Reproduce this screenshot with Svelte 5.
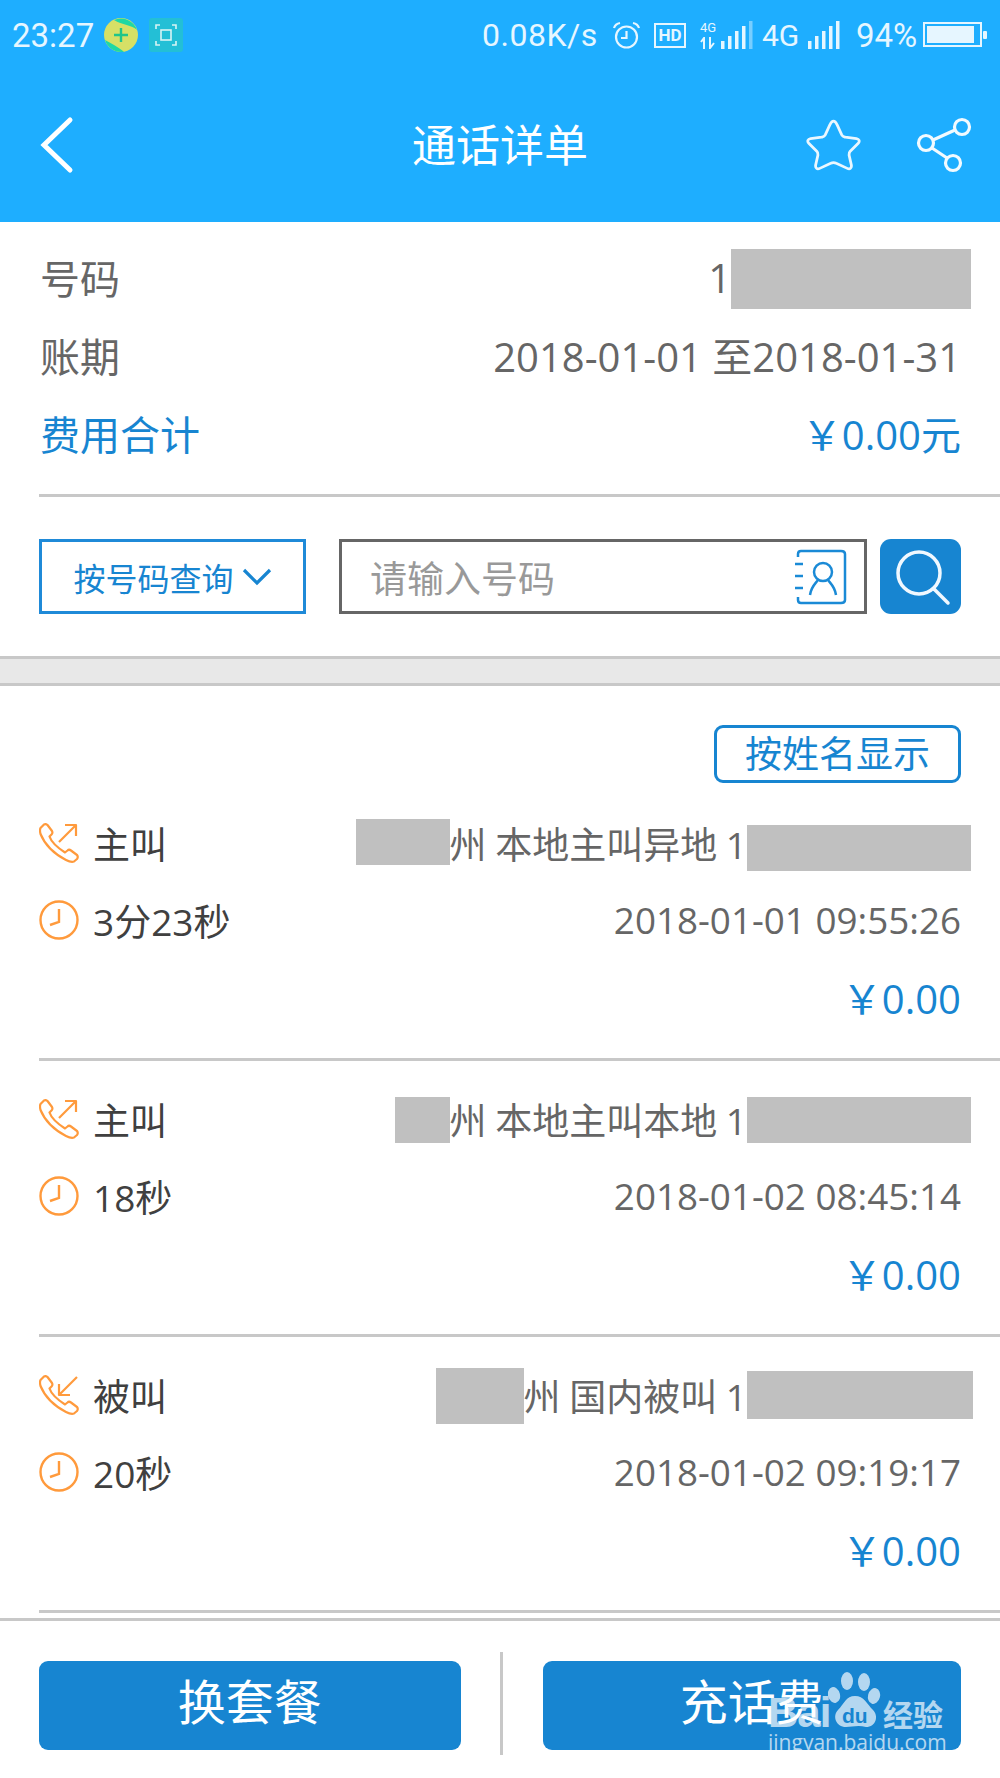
<script>
  const calls = [
    { type: 'out', label: '主叫', city: '州', kind: '本地主叫异地', w1: 94, h1: 46, off1: -2, off2: 10, h2: 46, w2: 224, dur: '3分23秒', time: '2018-01-01 09:55:26' },
    { type: 'out', label: '主叫', city: '州', kind: '本地主叫本地', w1: 55, h1: 46, off1: 3, off2: 3, h2: 46, w2: 224, dur: '18秒', time: '2018-01-02 08:45:14' },
    { type: 'in', label: '被叫', city: '州', kind: '国内被叫', w1: 88, h1: 56, off1: 2, off2: 1, h2: 48, w2: 226, dur: '20秒', time: '2018-01-02 09:19:17' }
  ];
</script>

<div class="page">
  <header class="top">
    <div class="status">
      <span class="clock">23:27</span>
      <svg class="app1" viewBox="0 0 34 34">
        <circle cx="17" cy="17" r="17" fill="#d6e066" />
        <path d="M10 2 A17 17 0 0 1 33 12 C28 7 18 7 10 2 Z M1 22 A17 17 0 0 0 20 33.700 C14 29 8 26 1 22 Z" fill="#1fd8a4" />
        <path d="M17 10 V24 M10 17 H24" stroke="#1fc58a" stroke-width="2.400" />
      </svg>
      <svg class="app2" viewBox="0 0 34 34">
        <rect width="34" height="34" rx="3" fill="#23bfd6" />
        <g fill="none" stroke="#d8f4f4" stroke-width="1.600">
          <path d="M7 11 V7 H11 M23 7 H27 V11 M27 23 V27 H23 M11 27 H7 V23" />
          <rect x="12" y="12" width="10" height="10" />
        </g>
      </svg>
      <span class="speed">0.08K/s</span>
      <svg class="alarm" viewBox="0 0 29 29" fill="none" stroke="#e6f6ff" stroke-width="2.200">
        <circle cx="14.500" cy="16" r="10.500" />
        <path d="M14.500 10 V17 H9 M2 7 C3 4 5 2.500 8 2 M27 7 C26 4 24 2.500 21 2" />
      </svg>
      <span class="hd">HD</span>
      <span class="net">
        <b>4G</b>
        <svg viewBox="0 0 16 12" width="16" height="12"><path d="M4 12 V1 L1 5 M10 0 V11 L14 6" fill="none" stroke="#e6f6ff" stroke-width="2" /></svg>
      </span>
      <svg class="bars" viewBox="0 0 32 28" fill="#e6f6ff">
        <rect x="0" y="20" width="3.500" height="8" /><rect x="7" y="15" width="3.500" height="13" /><rect x="14" y="10" width="3.500" height="18" /><rect x="21" y="5" width="3.500" height="23" /><rect x="28" y="0" width="3.500" height="28" opacity=".45" />
      </svg>
      <span class="lte">4G</span>
      <svg class="bars b2" viewBox="0 0 32 28" fill="#e6f6ff">
        <rect x="0" y="20" width="3.500" height="8" /><rect x="7" y="15" width="3.500" height="13" /><rect x="14" y="10" width="3.500" height="18" /><rect x="21" y="5" width="3.500" height="23" /><rect x="28" y="0" width="3.500" height="28" />
      </svg>
      <span class="pct">94%</span>
      <svg class="battery" viewBox="0 0 66 26">
        <rect x="1" y="1" width="57" height="23" fill="none" stroke="#e6f6ff" stroke-width="2" />
        <rect x="4" y="4" width="47" height="17" fill="#e6f6ff" />
        <rect x="60" y="9" width="4" height="8" rx="1" fill="#e6f6ff" />
      </svg>
    </div>
    <nav class="nav">
      <svg class="back" viewBox="0 0 36 58" fill="none" stroke="#fff" stroke-width="5" stroke-linecap="round"><path d="M32 4 L6 29 L32 54" /></svg>
      <h1>通话详单</h1>
      <svg class="star" viewBox="0 0 60 56" fill="none" stroke="#eaf7ff" stroke-width="3" stroke-linejoin="round">
        <path d="M30 2 C32 2 33 4 34 6 L39 17 C40 19 41 19 43 19.500 L55 21 C58 21.500 59 24 57 26 L48 35 C47 36 47 37 47 39 L49.500 50 C50 53 48 55 45 53.500 L33 48 C31 47 29 47 27 48 L15 53.500 C12 55 10 53 10.500 50 L13 39 C13 37 13 36 12 35 L3 26 C1 24 2 21.500 5 21 L17 19.500 C19 19 20 19 21 17 L26 6 C27 4 28 2 30 2 Z" />
      </svg>
      <svg class="share" viewBox="0 0 56 56" fill="none" stroke="#f2faff" stroke-width="3.200">
        <circle cx="46" cy="10" r="7.500" /><circle cx="10" cy="26" r="7.500" /><circle cx="37" cy="46" r="7.500" />
        <path d="M17 23 L39 13 M16 31 L31 41" />
      </svg>
    </nav>
  </header>

  <section class="summary">
    <div class="info"><span>号码</span><span class="val">1<i class="mask num"></i></span></div>
    <div class="info"><span>账期</span><span class="val">2018-01-01 至2018-01-31</span></div>
    <div class="info total"><span>费用合计</span><span class="val">￥0.00元</span></div>
  </section>

  <section class="query">
    <button class="pick">按号码查询
      <svg viewBox="0 0 30 18" width="30" height="18" fill="none" stroke="#1785d1" stroke-width="3.200"><path d="M2 2 L15 15 L28 2" /></svg>
    </button>
    <div class="input">
      <span>请输入号码</span>
      <svg viewBox="0 0 52 56" width="52" height="56" fill="none" stroke="#1a8ad6" stroke-width="2.500">
        <path d="M3 8 V5 Q3 2 6 2 H46 Q50 2 50 5 V51 Q50 54 46 54 H6 Q3 54 3 51 V48" />
        <path d="M0 15 H8 M0 27 H8 M0 39 H8" />
        <circle cx="28" cy="23" r="9" />
        <path d="M15 46 C16 38 20 35 23 31 M41 46 C40 38 36 35 33 31" />
      </svg>
    </div>
    <button class="search" aria-label="查询">
      <svg viewBox="0 0 60 60" width="60" height="60" fill="none" stroke="#f0f8ff" stroke-width="3.500">
        <circle cx="28" cy="26" r="21" /><path d="M43 42 L57 56" stroke-linecap="round" />
      </svg>
    </button>
  </section>

  <div class="band"></div>

  <section class="list">
    <div class="by-name"><button>按姓名显示</button></div>
    {#each calls as c}
      <article class="call">
        <div class="row">
          <span class="left">
            <svg class="ico" viewBox="0 0 40 40" fill="none" stroke="#ff9a3c" stroke-width="2.200" stroke-linejoin="round">
              <path d="M1.500 5 L5 1.500 Q7 0.500 8.500 2 L13 8 Q14 10 12.500 11.500 L10.500 13.500 Q13 21 26 29.500 L28.500 27.500 Q30 26 32 27.500 L38 32 Q39.500 34 38 36 L35 38.500 Q32 39.500 27 37 Q8 27 1.500 11 Q0.500 7 1.500 5 Z" />
              {#if c.type === 'out'}
                <path d="M20 19 L37 2 M26 2 H37 V13" />
              {:else}
                <path d="M38 2 L20 20 M20 9 V20 H31" />
              {/if}
            </svg>
            {c.label}
          </span>
          <span class="right">
            <i class="mask" style="width:{c.w1}px;height:{c.h1}px;margin-top:{c.off1}px"></i>
            <span class="txt">{c.city} {c.kind} 1</span>
            <i class="mask end" style="width:{c.w2}px;height:{c.h2}px;margin-top:{c.off2}px"></i>
          </span>
        </div>
        <div class="row">
          <span class="left">
            <svg class="ico" viewBox="0 0 40 40" fill="none" stroke="#ff9a3c" stroke-width="2.400">
              <circle cx="20" cy="20" r="18.500" /><path d="M20 9 V22 L11 25" />
            </svg>
            {c.dur}
          </span>
          <span class="time">{c.time}</span>
        </div>
        <div class="row"><span class="fee">￥0.00</span></div>
      </article>
    {/each}
  </section>

  <footer class="foot">
    <button>换套餐</button>
    <i class="sep"></i>
    <button>充话费</button>
    <div class="mark">
      <div class="logo">
        <span class="bai">Bai</span>
        <svg viewBox="0 0 54 56" width="54" height="56" fill="#fff">
          <ellipse cx="6" cy="23" rx="6" ry="8" transform="rotate(-15 6 23)" /><ellipse cx="19" cy="9" rx="6" ry="9" /><ellipse cx="36" cy="10" rx="6" ry="9" /><ellipse cx="46" cy="24" rx="6" ry="8" transform="rotate(15 46 24)" />
          <path d="M27 24 C18 24 16 32 10 38 C4 44 8 55 18 55 C24 55 30 53 38 55 C48 55 51 44 45 38 C39 32 36 24 27 24 Z" />
        </svg>
        <span class="du">du</span>
        <span class="jy">经验</span>
      </div>
      <div class="url">jingyan.baidu.com</div>
    </div>
  </footer>
</div>

<style>
  :global(body) {
    background: #fff;
  }

  .page {
    position: relative;
    width: 1000px;
    height: 1778px;
    overflow: hidden;
    background: #fff;
    font-family: "Open Sans", "Noto Sans CJK SC", sans-serif;
    color: #666;
  }

  button {
    font-family: inherit;
    padding: 0;
    background: none;
    cursor: pointer;
  }

  .top {
    height: 222px;
    background: #1eaeff;
  }

  .status {
    display: flex;
    align-items: center;
    height: 70px;
    padding-left: 12px;
    font-family: Roboto, sans-serif;
    font-size: 32px;
    color: #e6f6ff;
  }

  .clock { width: 92px; font-size: 33px; }
  .app1 { width: 34px; height: 34px; margin-right: 11px; }
  .app2 { width: 34px; height: 34px; }
  .speed { margin-left: 299px; width: 130px; letter-spacing: .5px; }
  .alarm { width: 29px; height: 29px; }
  .hd {
    margin-left: 13px;
    width: 32px;
    height: 25px;
    box-sizing: border-box;
    border: 2px solid #e6f6ff;
    font-size: 17px;
    font-weight: 700;
    line-height: 21px;
    text-align: center;
  }
  .net {
    display: flex;
    flex-direction: column;
    align-items: center;
    margin-left: 13px;
    width: 18px;
    gap: 2px;
  }
  .net b { font-size: 13px; line-height: 14px; font-weight: 400; }
  .bars { width: 32px; height: 28px; margin-left: 4px; }
  .b2 { margin-left: 10px; }
  .lte { margin-left: 9px; width: 36px; font-size: 30px; white-space: nowrap; }
  .pct { margin-left: 16px; width: 60px; font-size: 33px; white-space: nowrap; }
  .battery { width: 66px; height: 26px; margin-left: 7px; }

  .nav {
    position: relative;
    display: flex;
    align-items: center;
    height: 155px;
    margin-top: -3px;
  }
  .back { width: 36px; height: 58px; margin-left: 38px; }
  .nav h1 {
    position: absolute;
    left: 0;
    right: 0;
    margin: 0;
    padding-bottom: 3px;
    text-align: center;
    font-family: "Noto Sans CJK SC", sans-serif;
    font-size: 44px;
    font-weight: 400;
    color: #fff;
  }
  .star { width: 55px; height: 54px; margin-left: auto; }
  .share { width: 56px; height: 56px; margin-left: 55px; margin-right: 28px; }

  .mask {
    display: inline-block;
    flex: none;
    background: #c0c0c0;
  }

  .summary {
    margin-left: 39px;
    padding-top: 16px;
    height: 275px;
    box-sizing: border-box;
    border-bottom: 3px solid #c8c8c8;
  }
  .info {
    display: flex;
    justify-content: space-between;
    align-items: center;
    height: 78px;
    padding-left: 1px;
    padding-right: 39px;
    font-size: 40px;
  }
  .val {
    display: flex;
    align-items: center;
    font-size: 40px;
  }
  .mask.num {
    width: 240px;
    height: 60px;
    margin-top: 4px;
    margin-left: 0;
    margin-right: -10px;
  }
  .total { color: #1785d1; }

  .query {
    display: flex;
    align-items: stretch;
    height: 162px;
    box-sizing: border-box;
    padding: 42px 39px;
    border-bottom: 3px solid #c8c8c8;
  }
  .pick {
    display: flex;
    align-items: center;
    justify-content: center;
    gap: 8px;
    width: 267px;
    box-sizing: border-box;
    border: 3px solid #1f8ad8;
    font-size: 32px;
    color: #1785d1;
  }
  .input {
    display: flex;
    align-items: center;
    justify-content: space-between;
    width: 528px;
    margin-left: 33px;
    padding: 0 17px 0 28px;
    box-sizing: border-box;
    border: 3px solid #666;
    font-size: 37px;
    color: #999;
  }
  .search {
    display: flex;
    align-items: center;
    justify-content: center;
    width: 81px;
    margin-left: 13px;
    border: 0;
    border-radius: 11px;
    background: #1785d1;
  }

  .band {
    height: 27px;
    box-sizing: border-box;
    background: #e8e8e8;
    border-bottom: 3px solid #c8c8c8;
  }

  .list { margin-left: 39px; }

  .by-name {
    display: flex;
    justify-content: flex-end;
    padding: 39px 39px 0 0;
    height: 99px;
    box-sizing: border-box;
  }
  .by-name button {
    width: 247px;
    height: 58px;
    box-sizing: border-box;
    border: 3px solid #1785d1;
    border-radius: 9px;
    font-size: 37px;
    line-height: 50px;
    color: #1785d1;
  }

  .call {
    height: 276px;
    padding-top: 19px;
    box-sizing: border-box;
    border-bottom: 3px solid #c8c8c8;
  }
  .row {
    display: flex;
    align-items: center;
    justify-content: space-between;
    height: 77px;
    padding-right: 39px;
  }
  .left {
    display: flex;
    align-items: center;
    gap: 14px;
    font-size: 37px;
    color: #404040;
  }
  .ico { width: 40px; height: 40px; }
  .right {
    display: flex;
    align-items: center;
    font-size: 37px;
  }
  .mask.end {
    margin-right: -10px;
  }
  .call:last-child .mask.end { margin-right: -12px; }
  .txt { white-space: pre; word-spacing: -1px; }
  .time { font-size: 36.800px; }
  .fee {
    margin-left: auto;
    font-size: 40px;
    color: #1785d1;
  }

  .foot {
    position: absolute;
    left: 0;
    right: 0;
    bottom: 0;
    display: flex;
    align-items: center;
    height: 160px;
    box-sizing: border-box;
    padding: 0 39px 0;
    background: #fff;
    border-top: 3px solid #c8c8c8;
  }
  .foot button {
    height: 89px;
    margin-top: 12px;
    padding-bottom: 14px;
    border: 0;
    border-radius: 9px;
    background: #1785d1;
    font-family: "Noto Sans CJK SC", sans-serif;
    font-size: 48px;
    color: #fff;
  }
  .foot button:first-of-type { width: 422px; }
  .foot button:last-of-type { width: 419px; }
  .sep {
    width: 3px;
    height: 103px;
    margin: 8px 40px 0 39px;
    background: #c8c8c8;
  }

  .mark {
    position: absolute;
    left: 768px;
    top: 51px;
    width: 190px;
    color: #fff;
    opacity: .68;
  }
  .logo {
    position: relative;
    height: 57px;
  }
  .logo svg { position: absolute; left: 60px; top: 0; }
  .bai {
    position: absolute;
    left: 0;
    top: 17px;
    font-family: "Liberation Sans", sans-serif;
    font-size: 42px;
    font-weight: 700;
    line-height: 48px;
    letter-spacing: -1px;
  }
  .du {
    position: absolute;
    left: 74px;
    top: 33px;
    font-family: "Liberation Sans", sans-serif;
    font-size: 21px;
    font-weight: 700;
    line-height: 21px;
    color: #1785d1;
  }
  .jy {
    position: absolute;
    left: 115px;
    top: 23px;
    font-family: "Noto Sans CJK SC", sans-serif;
    font-size: 30px;
    font-weight: 700;
    line-height: 36px;
    white-space: nowrap;
  }
  .url {
    font-family: "Open Sans", sans-serif;
    font-size: 21px;
    line-height: 26px;
    white-space: nowrap;
  }
</style>
